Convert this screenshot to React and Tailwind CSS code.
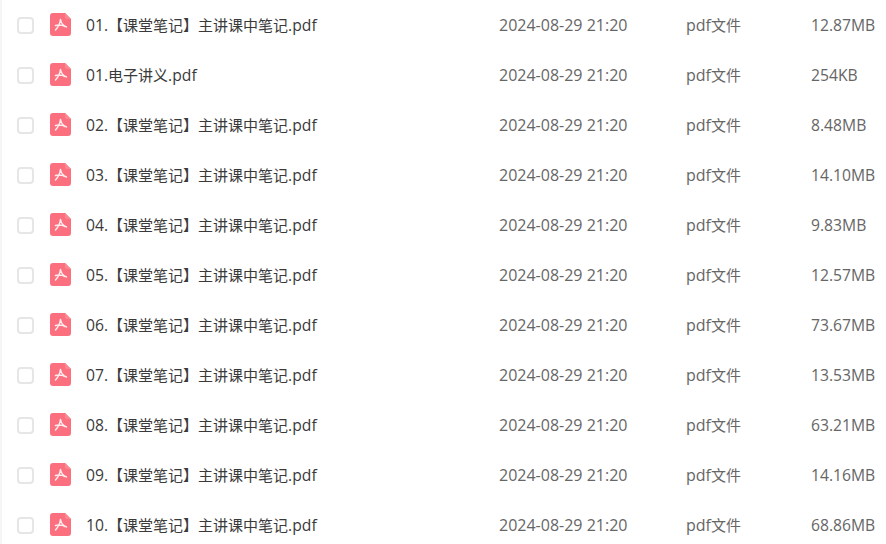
const files = [
  ["01.【课堂笔记】主讲课中笔记.pdf", "12.87MB"],
  ["01.电子讲义.pdf", "254KB"],
  ["02.【课堂笔记】主讲课中笔记.pdf", "8.48MB"],
  ["03.【课堂笔记】主讲课中笔记.pdf", "14.10MB"],
  ["04.【课堂笔记】主讲课中笔记.pdf", "9.83MB"],
  ["05.【课堂笔记】主讲课中笔记.pdf", "12.57MB"],
  ["06.【课堂笔记】主讲课中笔记.pdf", "73.67MB"],
  ["07.【课堂笔记】主讲课中笔记.pdf", "13.53MB"],
  ["08.【课堂笔记】主讲课中笔记.pdf", "63.21MB"],
  ["09.【课堂笔记】主讲课中笔记.pdf", "14.16MB"],
  ["10.【课堂笔记】主讲课中笔记.pdf", "68.86MB"],
];

// latin runs are about 16px, chinese runs a pixel smaller
function MixedText({ text }) {
  return text.split(/([\u3000-\u9fff\uff00-\uffef]+)/).map((part, index) =>
    index % 2 === 1 ? (
      <span key={index} className="text-[15px]">{part}</span>
    ) : (
      part
    )
  );
}

function PdfIcon() {
  return (
    <svg width="21" height="23" viewBox="0 0 21 23" className="mb-px shrink-0">
      <path d="M3 0H15L21 6V20a3 3 0 0 1-3 3H3a3 3 0 0 1-3-3V3a3 3 0 0 1 3-3Z" fill="#fb6f7e" />
      <path d="M15 0L21 6H17a2 2 0 0 1-2-2Z" fill="#fc8793" />
      <path
        d="M10.500 6.500c-.3 3-2.300 7.500-5 10.500M10.500 6.500c.5 3 3 6.300 6 7.500M5.500 12.500c3-.7 6.500-.7 9.500 1"
        fill="none"
        stroke="#ffecee"
        strokeWidth="1.500"
        strokeLinecap="round"
      />
    </svg>
  );
}

export default function App() {
  return (
    <div className="h-[544px] w-[886px] overflow-hidden border-l-2 border-[#f5f5f5] bg-white font-['Open_Sans','Noto_Sans_CJK_SC',sans-serif] text-[16px]">
      {files.map(([name, size], index) => (
        <div key={index} className="flex h-[50px] items-center">
          <span className="ml-[15px] h-[17px] w-[17px] shrink-0 rounded-[4px] border-2 border-[#e6e6e6] bg-white" />
          <div className="ml-4 flex w-[449px] shrink-0 items-center gap-[15px]">
            <PdfIcon />
            <span className="mt-0.5 text-[15.7px] text-[#3a3a3a]"><MixedText text={name} /></span>
          </div>
          <span className="w-[187px] shrink-0 text-[#666]">2024-08-29 21:20</span>
          <span className="w-[125px] shrink-0 text-[#666]"><MixedText text="pdf文件" /></span>
          <span className="mt-0.5 text-[15.7px] text-[#666]">{size}</span>
        </div>
      ))}
    </div>
  );
}
